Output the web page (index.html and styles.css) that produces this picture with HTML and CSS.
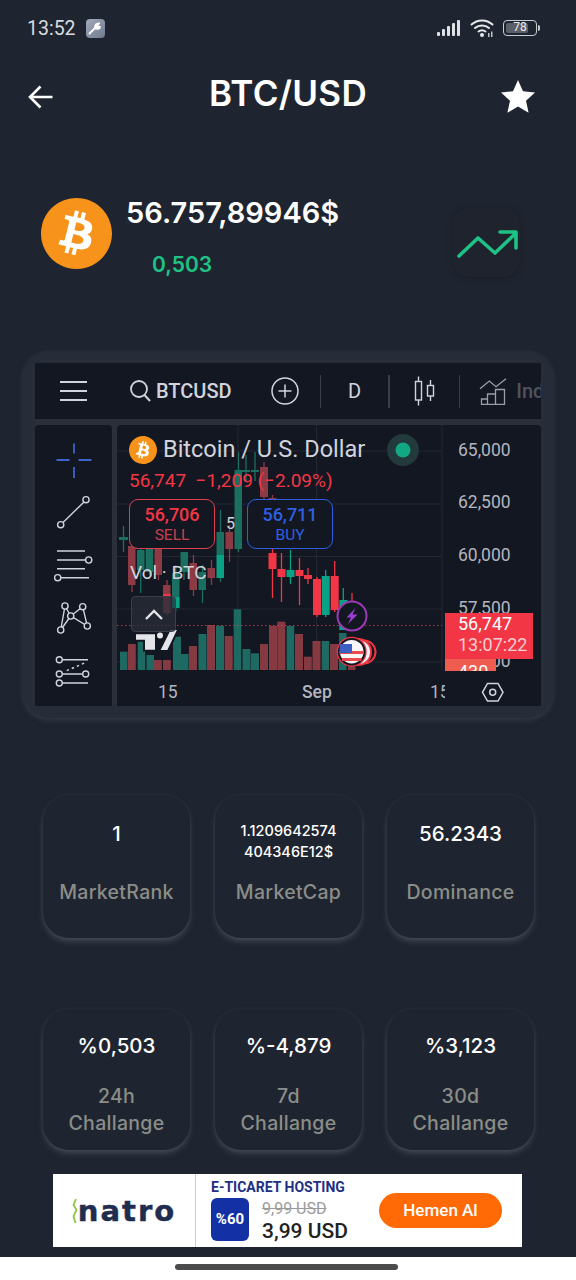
FILE: index.html
```html
<!DOCTYPE html>
<html lang="en">
<head>
    <meta charset="UTF-8">
    <meta name="viewport" content="width=device-width, initial-scale=1.0">
    <title>BTC/USD</title>
    <link rel="stylesheet" href="styles.css">
</head>
<body>
    <div class="status">
        <span class="clock">13:52</span>
        <span class="wrench">
            <svg width="14" height="14" viewBox="0 0 14 14"><path d="M1.5 12.5 7 7M7.2 6.8C6.4 4.6 8.2 2 11.2 2.4L9.4 4.4 10.2 5.8 12 6C11.8 7.8 9.4 8.6 7.2 6.8Z" fill="#fff" stroke="#fff" stroke-width="1.8" stroke-linecap="round" stroke-linejoin="round"/></svg>
        </span>
        <span class="status-right">
            <svg width="26" height="18" viewBox="0 0 26 18"><g fill="#dfe1e5"><rect x="0" y="13" width="3" height="4" rx="1"/><rect x="5" y="10" width="3" height="7" rx="1"/><rect x="10" y="7" width="3" height="10" rx="1"/><rect x="15" y="4" width="3" height="13" rx="1"/><rect x="20" y="1" width="3" height="16" rx="1"/></g></svg>
            <svg width="25" height="20" viewBox="0 0 25 20"><g fill="none" stroke="#e6e8eb" stroke-width="2" stroke-linecap="round"><path d="M1.5 6.5C7.500 1 16.500 1 22.500 6.500"/><path d="M5 10C9 6.500 15 6.500 19 10"/><path d="M8.500 13.500C10.500 12 13.500 12 15.500 13.500"/></g><circle cx="12" cy="17" r="2" fill="#e6e8eb"/><rect x="18" y="15" width="1.500" height="4" fill="#bfc2c7"/><rect x="21" y="13.500" width="1.500" height="5.500" fill="#bfc2c7"/></svg>
            <span class="battery"><span class="battery-fill"></span><span class="battery-num">78</span></span>
            <span class="battery-nub"></span>
        </span>
    </div>

    <div class="topbar">
        <svg class="back" width="26" height="26" viewBox="0 0 26 26"><path d="M24.500 13H2.500M12.500 2.500 2 13l10.500 10.500" fill="none" stroke="#fff" stroke-width="2.600"/></svg>
        <h1>BTC/USD</h1>
        <svg class="star" width="34" height="33" viewBox="0 0 34 33"><path d="M17 0l5 11.300 12 1.200-9 8.200 2.600 12.100L17 26.600 6.400 32.800 9 20.700 0 12.500l12-1.200z" fill="#fff"/></svg>
    </div>

    <div class="price-row">
        <svg class="coin" width="71" height="71" viewBox="0 0 64 64"><path fill="#f7931a" d="M63.04 39.741c-4.274 17.143-21.637 27.576-38.782 23.301C7.12 58.768-3.313 41.404.962 24.262 5.234 7.117 22.597-3.317 39.737.957c17.144 4.274 27.576 21.64 23.302 38.784z"/><path fill="#fff" d="M46.11 27.441c.636-4.258-2.606-6.547-7.039-8.074l1.438-5.768-3.512-.875-1.4 5.616c-.922-.23-1.87-.447-2.812-.662l1.41-5.653-3.509-.875-1.439 5.766c-.764-.174-1.514-.346-2.242-.527l.004-.018-4.842-1.209-.934 3.75s2.605.597 2.55.634c1.422.355 1.68 1.296 1.636 2.042l-1.638 6.571c.098.025.225.061.365.117l-.37-.092-2.297 9.205c-.174.432-.615 1.08-1.609.834.035.051-2.552-.637-2.552-.637l-1.743 4.02 4.57 1.139c.85.213 1.683.436 2.502.646l-1.453 5.835 3.507.875 1.44-5.772c.957.26 1.887.5 2.797.726L27.504 50.8l3.511.875 1.453-5.823c5.987 1.133 10.49.676 12.383-4.738 1.527-4.36-.075-6.875-3.225-8.516 2.294-.531 4.022-2.04 4.483-5.157zM38.087 38.69c-1.086 4.36-8.426 2.004-10.807 1.412l1.928-7.729c2.38.594 10.011 1.77 8.88 6.317zm1.085-11.312c-.99 3.966-7.1 1.951-9.083 1.457l1.748-7.01c1.983.494 8.367 1.416 7.335 5.553z"/></svg>
        <div class="price-text">
            <div class="price">56.757,89946$</div>
            <div class="delta">0,503</div>
        </div>
        <div class="trend">
            <svg width="67" height="69" viewBox="453 208 67 69"><path d="M459 256 478 238 495 253 516 233M500 232H516V248" fill="none" stroke="#1fc285" stroke-width="3.600" stroke-linecap="round" stroke-linejoin="round"/></svg>
        </div>
    </div>

    <div class="chart-card">
        <div class="tv">
            <div class="tv-toolbar">
                <span class="burger"><i></i><i></i><i></i></span>
                <svg class="tb-search" width="22" height="24" viewBox="0 0 22 24"><circle cx="10" cy="10" r="8" fill="none" stroke="#d1d4dc" stroke-width="1.800"/><path d="M15.500 16 21 22" stroke="#d1d4dc" stroke-width="2"/></svg>
                <span class="tb-symbol">BTCUSD</span>
                <svg class="tb-plus" width="28" height="28" viewBox="0 0 28 28"><circle cx="14" cy="14" r="13" fill="none" stroke="#d1d4dc" stroke-width="1.500"/><path d="M14 7.500v13M7.500 14h13" stroke="#d1d4dc" stroke-width="1.500"/></svg>
                <span class="tb-sep tb-sep-1"></span>
                <span class="tb-d">D</span>
                <span class="tb-sep tb-sep-2"></span>
                <svg class="tb-candles" width="22" height="30" viewBox="413 376 22 30"><path d="M417.500 376.500v5M417.500 400v5.500M429.500 380v5M429.500 396v5" stroke="#d1d4dc" stroke-width="1.400"/><rect x="414.500" y="381.500" width="6" height="18.500" fill="none" stroke="#d1d4dc" stroke-width="1.400"/><rect x="426.500" y="385.500" width="6" height="10.500" fill="none" stroke="#d1d4dc" stroke-width="1.400"/></svg>
                <span class="tb-sep tb-sep-3"></span>
                <svg class="tb-ind" width="28" height="28" viewBox="478 376 28 28"><path d="M479 387.700 488.300 380 495 385.700 505 377.700" fill="none" stroke="#9a9ea8" stroke-width="1.300"/><path d="M480.500 398h6v5.500h-6zM486.500 393h8v10.500h-8zM494.500 388.500h9v15h-9z" fill="none" stroke="#9a9ea8" stroke-width="1.300"/></svg>
                <span class="tb-ind-text">Ind</span>
            </div>
            <div class="tv-body">
                <div class="tv-tools">
                    <svg width="77" height="281" viewBox="35 425 77 281">
                        <path d="M74 443.500v10M74 467v11M56.500 460h13M78.500 460h13" stroke="#3f63c9" stroke-width="1.800" fill="none"/>
                        <g class="tool">
                            <path d="M63 522.500 84 502"/>
                            <circle cx="86" cy="499.700" r="3.100"/><circle cx="60.700" cy="524.700" r="3.100"/>
                            <path d="M57 551h28M57 560h28.500M57 568.700h28M60.700 577.700H89"/>
                            <circle cx="88.700" cy="560" r="3.100"/><circle cx="57.700" cy="577.700" r="3.100"/>
                            <path d="M65 606 70.700 616 82.700 606.700 87.300 626 70.700 616 60.700 630 65 606"/>
                            <circle cx="65" cy="606" r="3.100"/><circle cx="82.700" cy="606.700" r="3.100"/><circle cx="70.700" cy="616" r="3.100"/><circle cx="60.700" cy="630" r="3.100"/><circle cx="87.300" cy="626" r="3.100"/>
                            <path d="M62.500 659.700H88M62.500 674H82.500M62.500 683H88"/>
                            <path d="M66.700 670.700 85 662.700" stroke-dasharray="2.500 3"/>
                            <circle cx="59.300" cy="659.700" r="3"/><circle cx="59.300" cy="674" r="3"/><circle cx="85.700" cy="674" r="3"/><circle cx="59.300" cy="683" r="3"/>
                        </g>
                    </svg>
                </div>
                <div class="tv-canvas">
                    <svg class="tv-svg" width="424" height="281" viewBox="117 425 424 281">
                        <path class="grid" d="M117 451H442M117 504H442M117 556.500H442M117 609H442M117 662H442M238 425V671M316.500 425V671M442 425V706"/>

                        <!-- volume -->
                        <g class="vol-g">
                            <rect x="120" y="651.700" width="7.500" height="18.300"/><rect x="137.700" y="640" width="7.500" height="30"/><rect x="146.500" y="655" width="7.500" height="15"/><rect x="173" y="636.700" width="8" height="33.300"/><rect x="181" y="654" width="7.500" height="16"/><rect x="198.500" y="634" width="8" height="36"/><rect x="216" y="625.700" width="8" height="44.300"/><rect x="233.700" y="609.300" width="7.500" height="60.700"/><rect x="242.500" y="649" width="8" height="21"/><rect x="251" y="653.300" width="8" height="16.700"/><rect x="286.700" y="626" width="7.500" height="44"/><rect x="321.700" y="641" width="7.500" height="29"/><rect x="339" y="633" width="7.500" height="37"/>
                        </g>
                        <g class="vol-r">
                            <rect x="128" y="644" width="7.800" height="26"/><rect x="154" y="660" width="7.800" height="10"/><rect x="163" y="660" width="7.800" height="10"/><rect x="189" y="646" width="8" height="24"/><rect x="207" y="625" width="8" height="45"/><rect x="224.700" y="636" width="8" height="34"/><rect x="260" y="644" width="8" height="26"/><rect x="269" y="625.700" width="8" height="44.300"/><rect x="277.300" y="621.700" width="8" height="48.300"/><rect x="295" y="634" width="8" height="36"/><rect x="304" y="656.700" width="7.800" height="13.300"/><rect x="312.500" y="641" width="8" height="29"/><rect x="330" y="644" width="8" height="26"/><rect x="348" y="660" width="7.500" height="10"/>
                        </g>

                        <!-- dim candles under the legend -->
                        <g class="wick-gd">
                            <path d="M123.500 526V552M140.700 545V593M149.700 545V575M175.700 565V612M184 555V580M202.500 565V603M220.500 510V582M238.500 452V552M246 455V481M255 452V481"/>
                        </g>
                        <g class="wick-rd">
                            <path d="M132 540V592M158.500 545V580M167 580V615M193.500 555V596M211.500 560V585M229.500 525V562M264 462V500M272.500 495V505"/>
                        </g>
                        <g class="body-gd">
                            <rect x="119" y="537" width="9" height="3"/><rect x="137" y="550" width="7.500" height="20"/><rect x="145.700" y="548" width="7.500" height="24"/><rect x="172" y="573" width="7.500" height="35"/><rect x="180.500" y="552" width="7.500" height="20"/><rect x="198.500" y="572" width="7.500" height="18"/><rect x="216.500" y="532" width="7.500" height="23"/><rect x="234.500" y="470" width="7.500" height="79"/><rect x="242" y="470" width="8" height="2"/><rect x="251" y="470" width="8" height="2"/>
                        </g>
                        <g class="body-rd">
                            <rect x="128" y="546" width="7.500" height="39"/><rect x="154.500" y="548" width="7.500" height="27"/><rect x="163" y="585" width="7.500" height="28"/><rect x="189.500" y="563" width="7.500" height="27"/><rect x="207.500" y="568" width="7.500" height="10"/><rect x="225.500" y="532" width="7.500" height="17"/><rect x="260" y="467" width="8" height="30"/><rect x="268.500" y="498" width="8" height="6"/>
                        </g>

                        <!-- bright candles -->
                        <g class="wick-r">
                            <path d="M272.500 549V598M281.500 553V602M299.500 558V605M308 568V584M317 577V617M334.700 561V612M352 593V601"/>
                        </g>
                        <g class="wick-g">
                            <path d="M290.500 550V584M325.700 570V617M343.300 588V600"/>
                        </g>
                        <g class="body-r">
                            <rect x="268.500" y="553" width="8" height="16"/><rect x="277.500" y="569" width="8" height="8"/><rect x="295.500" y="570" width="8" height="6"/><rect x="304" y="575" width="8" height="4"/><rect x="313" y="579" width="8" height="36"/><rect x="330.700" y="576" width="8" height="34"/><rect x="163" y="594" width="7.500" height="3"/>
                        </g>
                        <g class="body-g">
                            <rect x="286.500" y="570" width="8" height="7"/><rect x="321.700" y="576" width="8" height="39"/><rect x="339.300" y="600" width="8" height="30"/><rect x="216.500" y="555" width="7.500" height="23"/><rect x="172" y="597" width="7.500" height="11"/>
                        </g>

                        <path class="last-line" d="M117 625.500H442"/>
                        <text class="num-small" x="226" y="529">5</text>

                        <circle cx="403" cy="450" r="16" fill="#223a3c"/>
                        <circle cx="403" cy="450" r="7.500" fill="#12a884"/>

                        <g class="axis">
                            <text x="458" y="456">65,000</text>
                            <text x="458" y="508">62,500</text>
                            <text x="458" y="561">60,000</text>
                            <text x="458" y="613.500">57,500</text>
                            <text x="458" y="667">55,000</text>
                        </g>

                        <rect x="445" y="613" width="88" height="46" fill="#f23645"/>
                        <text class="label-top" x="458" y="630">56,747</text>
                        <text class="label-time" x="458" y="651">13:07:22</text>
                        <rect x="445" y="659" width="51" height="12" fill="#ef5c50"/>
                        <text class="label-top" x="458" y="678">430</text>

                        <!-- events -->
                        <circle cx="364" cy="652" r="11.500" fill="#131722" stroke="#f23645" stroke-width="2"/>
                        <circle cx="358" cy="652" r="13" fill="#f5f5f5" stroke="#f23645" stroke-width="2"/>
                        <circle cx="351.700" cy="651.700" r="15" fill="#f23645"/>
                        <circle cx="351.700" cy="651.700" r="12.800" fill="#f7f7f7" stroke="#131722" stroke-width="2"/>
                        <path d="M339.500 651h24.400v3H339.500zM342 658h19.500v3H342z" fill="#e94b4f"/>
                        <path d="M340 644h12v9h-12.500q0-5 .5-9z" fill="#3c5fc4"/>
                        <circle cx="352" cy="616" r="14.500" fill="#131722" stroke="#9c3ab5" stroke-width="2"/>
                        <path d="M355.500 608 346.500 617.500H351L348 624 357.500 614.500H352.500Z" fill="#9c3fd0"/>

                        <!-- time axis covers what runs below the panes -->
                        <rect x="117" y="671" width="424" height="35" fill="#131722"/>
                        <text class="time" x="158" y="698">15</text>
                        <text class="time time-bold" x="302" y="698">Sep</text>
                        <text class="time" x="430" y="698">15</text>
                        <rect x="445" y="672" width="96" height="34" fill="#131722"/>
                        <path d="M487.500 683.500h10.500l5 8.800-5 8.800h-10.500l-5-8.800z" fill="none" stroke="#d1d4dc" stroke-width="1.500"/>
                        <circle cx="492.700" cy="692.300" r="3" fill="none" stroke="#d1d4dc" stroke-width="1.500"/>

                        <!-- logo -->
                        <path class="tv-logo" d="M135 633.300H156V650.700H144V640.700H135Z"/>
                        <circle class="tv-logo" cx="160" cy="635.500" r="4"/>
                        <path class="tv-logo" d="M178.500 629 168 651H159L170 629Z"/>
                    </svg>

                    <div class="legend">
                        <div class="legend-title">
                            <svg width="28" height="28" viewBox="0 0 64 64"><path fill="#f7931a" d="M63.04 39.741c-4.274 17.143-21.637 27.576-38.782 23.301C7.12 58.768-3.313 41.404.962 24.262 5.234 7.117 22.597-3.317 39.737.957c17.144 4.274 27.576 21.64 23.302 38.784z"/><path fill="#fff" d="M46.11 27.441c.636-4.258-2.606-6.547-7.039-8.074l1.438-5.768-3.512-.875-1.4 5.616c-.922-.23-1.87-.447-2.812-.662l1.41-5.653-3.509-.875-1.439 5.766c-.764-.174-1.514-.346-2.242-.527l.004-.018-4.842-1.209-.934 3.75s2.605.597 2.55.634c1.422.355 1.68 1.296 1.636 2.042l-1.638 6.571c.098.025.225.061.365.117l-.37-.092-2.297 9.205c-.174.432-.615 1.08-1.609.834.035.051-2.552-.637-2.552-.637l-1.743 4.02 4.57 1.139c.85.213 1.683.436 2.502.646l-1.453 5.835 3.507.875 1.44-5.772c.957.26 1.887.5 2.797.726L27.504 50.8l3.511.875 1.453-5.823c5.987 1.133 10.49.676 12.383-4.738 1.527-4.36-.075-6.875-3.225-8.516 2.294-.531 4.022-2.04 4.483-5.157zM38.087 38.69c-1.086 4.36-8.426 2.004-10.807 1.412l1.928-7.729c2.38.594 10.011 1.77 8.88 6.317zm1.085-11.312c-.99 3.966-7.1 1.951-9.083 1.457l1.748-7.01c1.983.494 8.367 1.416 7.335 5.553z"/></svg>
                            <span>Bitcoin / U.S. Dollar</span>
                        </div>
                        <div class="legend-price">56,747&nbsp; −1,209 (−2.09%)</div>
                        <div class="trade-row">
                            <div class="trade trade-sell"><b>56,706</b><span>SELL</span></div>
                            <div class="trade trade-buy"><b>56,711</b><span>BUY</span></div>
                        </div>
                        <div class="legend-vol">Vol · BTC</div>
                    </div>

                    <div class="collapse">
                        <svg width="20" height="12" viewBox="0 0 20 12"><path d="M2 10 10 2l8 8" fill="none" stroke="#e4e5e8" stroke-width="2.400"/></svg>
                    </div>
                </div>
            </div>
        </div>
    </div>

    <div class="stats">
        <div class="stat stat-tall">
            <div class="stat-value">1</div>
            <div class="stat-label">MarketRank</div>
        </div>
        <div class="stat stat-tall">
            <div class="stat-value stat-value-small">1.1209642574<br>404346E12$</div>
            <div class="stat-label">MarketCap</div>
        </div>
        <div class="stat stat-tall">
            <div class="stat-value">56.2343</div>
            <div class="stat-label">Dominance</div>
        </div>
        <div class="stat stat-change">
            <div class="stat-value">%0,503</div>
            <div class="stat-label">24h<br>Challange</div>
        </div>
        <div class="stat stat-change">
            <div class="stat-value">%-4,879</div>
            <div class="stat-label">7d<br>Challange</div>
        </div>
        <div class="stat stat-change">
            <div class="stat-value">%3,123</div>
            <div class="stat-label">30d<br>Challange</div>
        </div>
    </div>

    <div class="ad">
        <div class="ad-logo">
            <svg width="6" height="24" viewBox="0 0 6 24"><path d="M4 0 1.500 6 4.500 11 1.500 17 3.500 24" fill="none" stroke="#8fc73e" stroke-width="1.800"/></svg>
            <span>natro</span>
        </div>
        <div class="ad-body">
            <div class="ad-title">E-TICARET HOSTING</div>
            <div class="ad-offer">
                <div class="ad-badge">%60</div>
                <div class="ad-prices">
                    <s>9,99 USD</s>
                    <b>3,99 USD</b>
                </div>
            </div>
        </div>
        <div class="ad-btn">Hemen Al</div>
    </div>

    <div class="home-strip"><span class="home-bar"></span></div>
</body>
</html>
```

FILE: styles.css
```css
* {
    box-sizing: border-box;
}

body {
    margin: 0;
    width: 576px;
    height: 1280px;
    overflow: hidden;
    display: flex;
    flex-direction: column;
    background-color: #1f2530;
    color: #fff;
    font-family: Inter, "Open Sans", sans-serif;
}

/* status bar */
.status {
    height: 56px;
    flex-shrink: 0;
    display: flex;
    align-items: center;
    padding: 0 36px 0 27px;
}

.clock {
    font-family: Roboto, sans-serif;
    font-size: 19.500px;
    color: #d9dbdf;
}

.wrench {
    width: 19px;
    height: 19px;
    margin-left: 10px;
    border-radius: 4px;
    background: linear-gradient(135deg, #a3abba, #6f7a90);
    display: flex;
    align-items: center;
    justify-content: center;
}

.status-right {
    margin-left: auto;
    display: flex;
    align-items: center;
}

.status-right svg + svg {
    margin-left: 7px;
}

.battery {
    position: relative;
    width: 34px;
    height: 16px;
    margin-left: 8px;
    padding: 2px;
    border: 1.500px solid #c9ccd1;
    border-radius: 4px;
    display: block;
}

.battery-fill {
    display: block;
    width: 78%;
    height: 100%;
    background-color: #5b5f67;
    border-radius: 2px;
}

.battery-num {
    position: absolute;
    left: 0;
    right: 0;
    top: 0;
    text-align: center;
    font-family: Roboto, sans-serif;
    font-size: 12px;
    line-height: 13px;
    color: #eceef0;
}

.battery-nub {
    width: 2px;
    height: 6px;
    margin-left: 1px;
    background-color: #c9ccd1;
    border-radius: 0 2px 2px 0;
}

/* header */
.topbar {
    height: 74px;
    flex-shrink: 0;
    display: grid;
    grid-template-columns: 1fr auto 1fr;
    align-items: center;
    padding: 0 41px 0 28px;
}

.topbar h1 {
    margin: 0 0 0 13px;
    font-size: 35px;
    font-weight: 600;
    letter-spacing: 0.3px;
    line-height: 74px;
}

.back {
    margin-top: 8px;
}

.star {
    justify-self: end;
    margin-top: 6px;
}

/* price */
.price-row {
    height: 79px;
    margin-top: 68px;
    flex-shrink: 0;
    display: flex;
    padding: 0 56px 0 41px;
}

.price-text {
    margin-left: 14px;
}

.price {
    font-size: 29px;
    font-weight: 600;
    line-height: 30px;
}

.delta {
    margin-top: 22px;
    padding-left: 26px;
    font-size: 21px;
    font-weight: 600;
    line-height: 30px;
    color: #1fc285;
}

.trend {
    width: 67px;
    height: 69px;
    margin-left: auto;
    margin-top: 10px;
    border-radius: 16px;
    background-color: #1e232d;
    box-shadow: 0 1px 6px rgba(12, 15, 20, 0.35);
}

.trend svg {
    display: block;
}

/* tradingview embed */
.chart-card {
    width: 530px;
    height: 367px;
    margin: 74px 0 0 23px;
    flex-shrink: 0;
    padding: 12px;
    background-color: #272d38;
    border-radius: 26px;
    box-shadow: 0 2px 5px rgba(70, 78, 90, 0.55);
}

.tv {
    height: 343px;
    background-color: #2a2f3a;
    overflow: hidden;
    font-family: Roboto, sans-serif;
}

.tv-toolbar {
    height: 56px;
    display: flex;
    align-items: center;
    overflow: hidden;
    background-color: #131722;
    color: #d1d4dc;
}

.tv-toolbar > * {
    flex-shrink: 0;
}

.burger {
    width: 27px;
    margin-left: 25px;
    display: flex;
    flex-direction: column;
    gap: 6.500px;
}

.burger i {
    display: block;
    height: 2.500px;
    background-color: #d1d4dc;
}

.tb-search {
    margin-left: 42px;
}

.tb-symbol {
    margin-left: 5px;
    font-size: 20px;
    font-weight: 500;
}

.tb-plus {
    margin-left: 39px;
}

.tb-sep {
    width: 1.500px;
    height: 33px;
    background-color: #3a3e49;
}

.tb-sep-1 {
    margin-left: 21px;
}

.tb-d {
    margin-left: 27px;
    font-size: 20px;
}

.tb-sep-2 {
    margin-left: 27px;
}

.tb-candles {
    margin-left: 24px;
}

.tb-sep-3 {
    margin-left: 23px;
}

.tb-ind {
    margin-left: 19px;
}

.tb-ind-text {
    margin-left: 9px;
    font-size: 20px;
    font-weight: 500;
    color: #4f535e;
    white-space: nowrap;
}

.tv-body {
    height: 281px;
    margin-top: 6px;
    display: grid;
    grid-template-columns: 77px 424px;
    column-gap: 5px;
}

.tv-tools {
    background-color: #131722;
    border-radius: 4px 4px 0 0;
}

.tv-tools svg,
.tv-svg {
    display: block;
}

.tool {
    fill: none;
    stroke: #d1d4dc;
    stroke-width: 1.400;
}

.tool circle {
    fill: #131722;
}

.tv-canvas {
    position: relative;
    background-color: #131722;
    border-radius: 4px 4px 0 0;
    overflow: hidden;
}

.grid {
    fill: none;
    stroke: #242833;
    stroke-width: 1;
}

.vol-g {
    fill: #1e6a62;
}

.vol-r {
    fill: #843a40;
}

.wick-gd path,
.wick-rd path,
.wick-r path,
.wick-g path {
    fill: none;
    stroke-width: 1.300;
}

.wick-gd path {
    stroke: #1b6f60;
}

.wick-rd path {
    stroke: #8d3a44;
}

.wick-r path {
    stroke: #f23645;
}

.wick-g path {
    stroke: #0aa284;
}

.body-gd {
    fill: #1b6f60;
}

.body-rd {
    fill: #8d3a44;
}

.body-r {
    fill: #f23645;
}

.body-g {
    fill: #0aa284;
}

.last-line {
    fill: none;
    stroke: #f23645;
    stroke-width: 1;
    stroke-dasharray: 1.500 2.500;
    opacity: 0.8;
}

.num-small {
    font-size: 16px;
    fill: #d1d4dc;
}

.axis text {
    font-size: 17.500px;
    fill: #b2b5be;
}

.label-top {
    font-size: 18px;
    fill: #fff;
}

.label-time {
    font-size: 18px;
    fill: #f8cdd1;
}

.time {
    font-size: 17.500px;
    fill: #b2b5be;
}

.time-bold {
    font-weight: 500;
}

.tv-logo {
    fill: #e4e5e9;
    stroke: #131722;
    stroke-width: 2;
}

.legend {
    position: absolute;
    left: 12px;
    top: 11px;
}

.legend-title {
    height: 28px;
    display: flex;
    align-items: center;
    gap: 6px;
    font-size: 23.500px;
    color: #d1d4dc;
    white-space: nowrap;
}

.legend-title span {
    margin-top: -2px;
}

.legend-price {
    height: 22px;
    margin-top: 6px;
    font-size: 19px;
    line-height: 22px;
    color: #f23645;
    white-space: nowrap;
}

.trade-row {
    margin-top: 7px;
    display: flex;
    gap: 32px;
}

.trade {
    width: 86px;
    height: 50px;
    border: 1px solid;
    border-radius: 9px;
    display: flex;
    flex-direction: column;
    align-items: center;
    justify-content: center;
    background-color: #131722;
}

.trade b {
    font-size: 18px;
    font-weight: 500;
    line-height: 22px;
}

.trade span {
    font-size: 15.500px;
    line-height: 19px;
}

.trade-sell {
    color: #f23645;
    border-color: #d8414f;
}

.trade-sell span {
    color: #c9404d;
}

.trade-buy {
    color: #2f5fe0;
    border-color: #2f5fe0;
}

.legend-vol {
    height: 22px;
    margin-top: 13px;
    margin-left: 1px;
    font-size: 19px;
    line-height: 22px;
    color: #d1d4dc;
}

.collapse {
    position: absolute;
    left: 14px;
    top: 171px;
    width: 45px;
    height: 36px;
    padding-top: 9px;
    border: 1px solid #3a3f4b;
    border-radius: 4px;
    background-color: rgba(42, 46, 57, 0.72);
    text-align: center;
}

/* stat cards */
.stats {
    margin: 77px 0 0 43px;
    width: 491px;
    flex-shrink: 0;
    display: grid;
    grid-template-columns: repeat(3, 147px);
    column-gap: 25px;
    row-gap: 71px;
}

.stat {
    background-color: #1f2530;
    border-radius: 26px;
    text-align: center;
    box-shadow: 0 4px 6px -1px rgba(98, 106, 120, 0.55), 0 0 4px rgba(98, 106, 120, 0.14);
}

.stat-tall {
    height: 143px;
    padding-top: 24px;
}

.stat-change {
    height: 141px;
    padding-top: 22px;
}

.stat-value {
    height: 30px;
    font-size: 20.500px;
    font-weight: 500;
    line-height: 30px;
}

.stat-value-small {
    height: 42px;
    margin-top: 1px;
    margin-bottom: -13px;
    font-size: 14.500px;
    line-height: 21px;
}

.stat-label {
    margin-top: 30px;
    font-size: 19.500px;
    font-weight: 500;
    line-height: 27px;
    color: #8b8d88;
    letter-spacing: 0.3px;
}

.stat-change .stat-label {
    margin-top: 22px;
}

/* banner */
.ad {
    width: 469px;
    height: 73px;
    margin: 24px 0 0 53px;
    flex-shrink: 0;
    display: flex;
    align-items: center;
    background-color: #fff;
    font-family: Roboto, sans-serif;
}

.ad-logo {
    width: 143px;
    height: 100%;
    display: flex;
    align-items: center;
    justify-content: center;
    gap: 0;
    border-right: 1px solid #cfcfcf;
}

.ad-logo span {
    font-family: "DejaVu Sans", sans-serif;
    font-size: 29px;
    font-weight: 700;
    letter-spacing: 2px;
    line-height: 30px;
    color: #1f2d4f;
    -webkit-text-stroke: 0.5px #1f2d4f;
}

.ad-body {
    width: 168px;
    padding-left: 15px;
}

.ad-title {
    font-size: 14px;
    font-weight: 700;
    line-height: 17px;
    color: #1e2f86;
    white-space: nowrap;
}

.ad-offer {
    margin-top: 2px;
    display: flex;
}

.ad-badge {
    width: 38px;
    height: 43px;
    border-radius: 6px;
    background-color: #1331a5;
    color: #fff;
    font-size: 15px;
    font-weight: 700;
    line-height: 43px;
    text-align: center;
}

.ad-prices {
    margin-left: 13px;
    display: flex;
    flex-direction: column;
    white-space: nowrap;
}

.ad-prices s {
    font-size: 16px;
    line-height: 21px;
    color: #9a9a9a;
}

.ad-prices b {
    font-size: 21px;
    font-weight: 500;
    line-height: 24px;
    color: #222;
}

.ad-btn {
    width: 123px;
    height: 35px;
    margin-left: 15px;
    border-radius: 18px;
    background-color: #ff6a07;
    color: #fff;
    font-size: 17px;
    font-weight: 500;
    line-height: 35px;
    text-align: center;
}

.home-strip {
    flex: 1;
    margin-top: 10px;
    padding: 7px 4px 0 0;
    background-color: #fff;
    display: flex;
    justify-content: center;
}

.home-bar {
    width: 223px;
    height: 6px;
    border-radius: 3px;
    background-color: #4b4b4b;
}
```
